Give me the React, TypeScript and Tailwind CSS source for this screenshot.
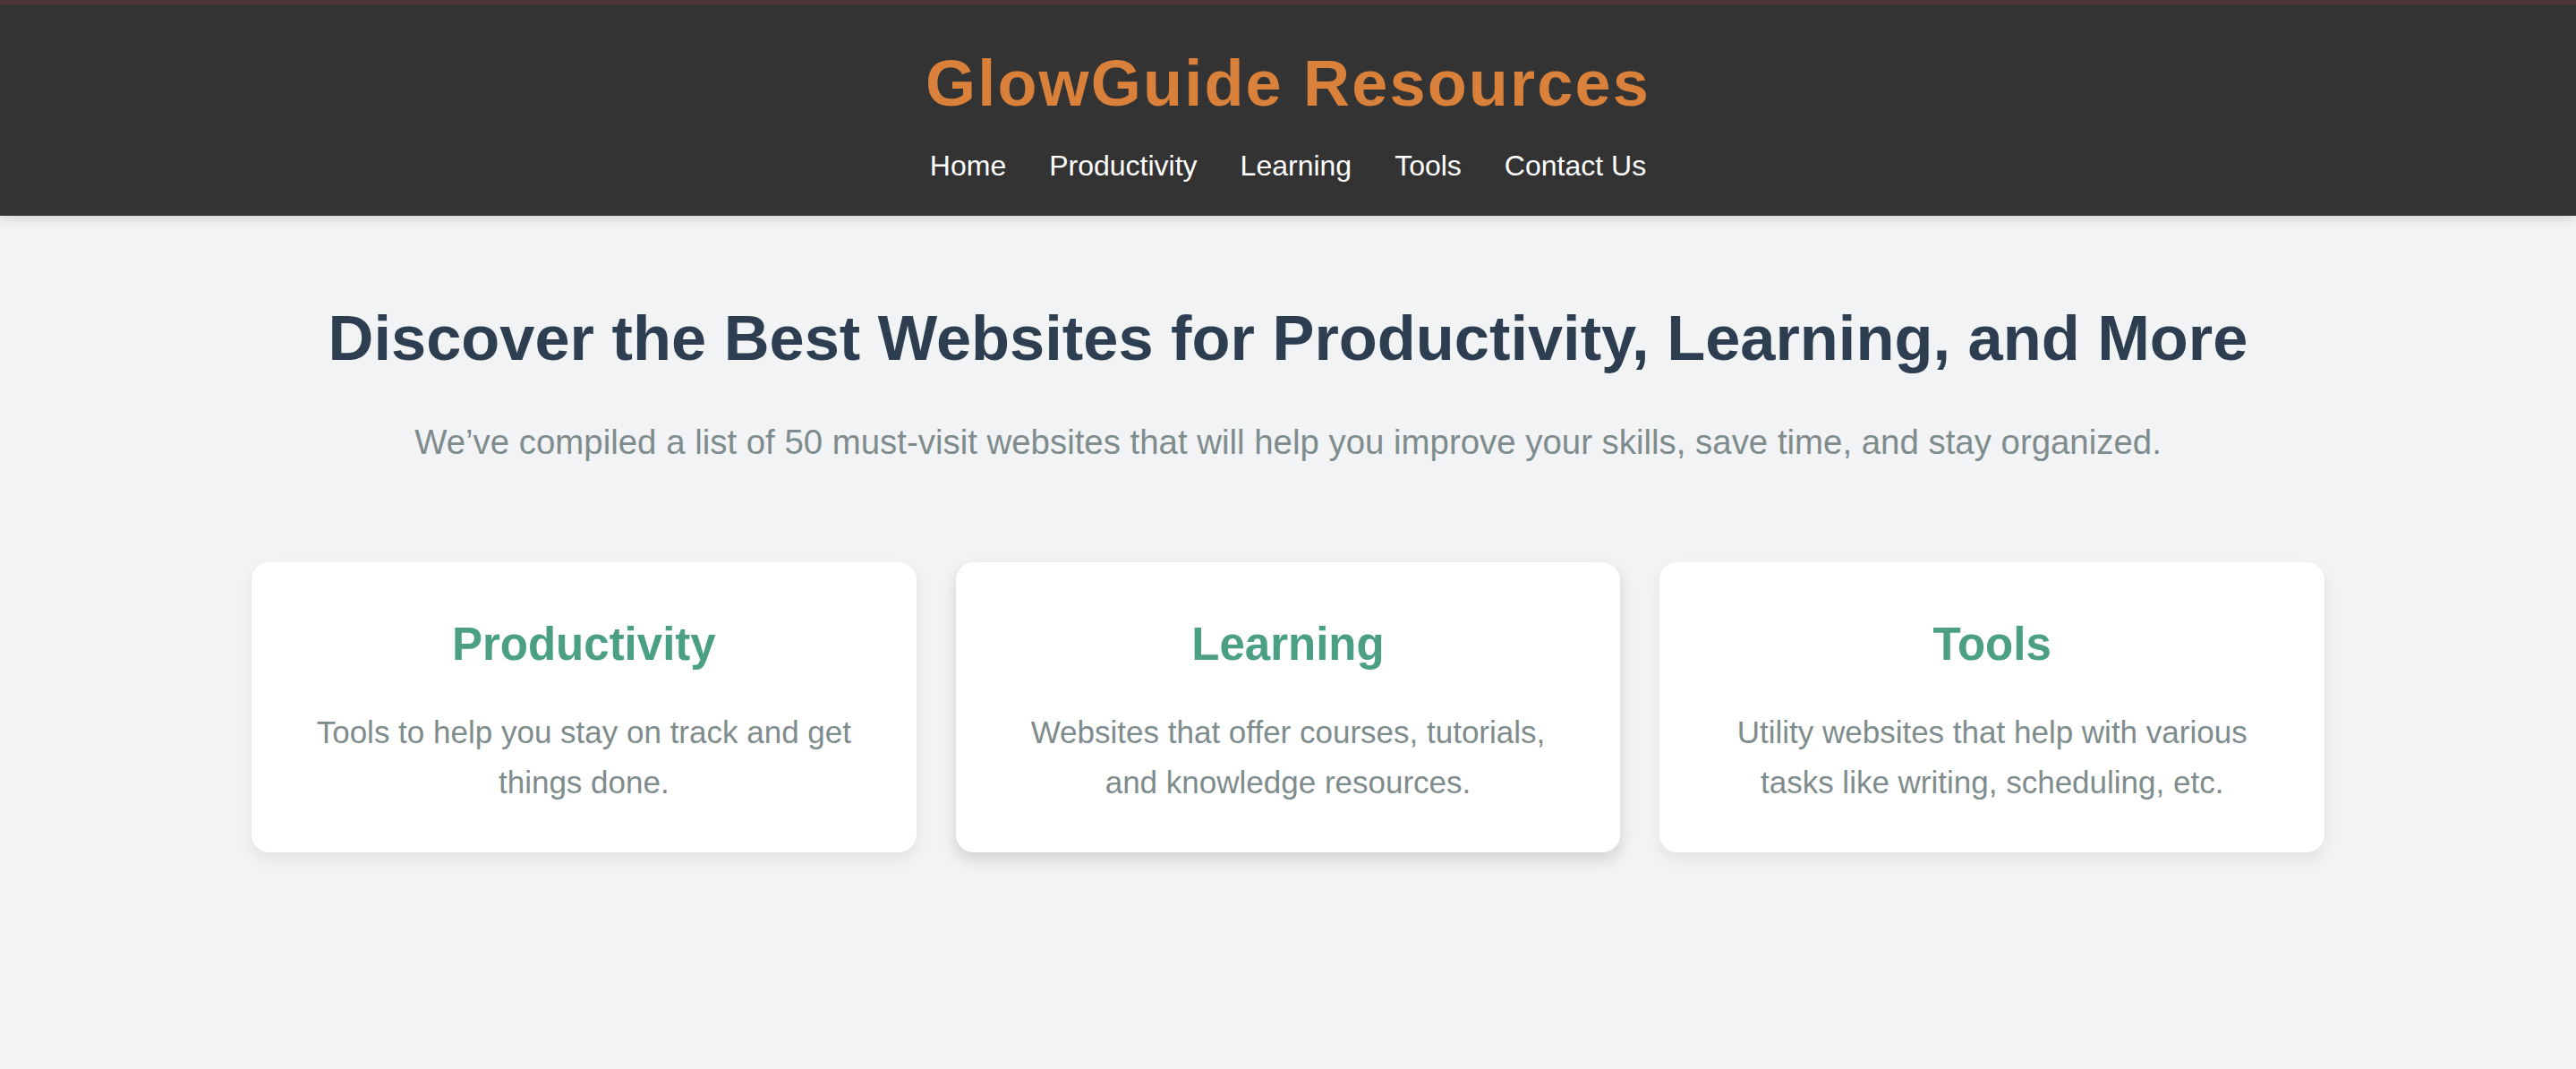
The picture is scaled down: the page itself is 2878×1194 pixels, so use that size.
import React from "react";

const cards = [
  { title: "Productivity", text: "Tools to help you stay on track and get things done.", strong: false },
  { title: "Learning", text: "Websites that offer courses, tutorials, and knowledge resources.", strong: true },
  { title: "Tools", text: "Utility websites that help with various tasks like writing, scheduling, etc.", strong: false },
];

export default function App() {
  return (
    <div
      className="min-h-[1194px] bg-[#f2f3f5] text-center"
      style={{ fontFamily: '"Liberation Sans", Arial, sans-serif' }}
    >
      <header className="relative z-10 bg-[#333333] border-t-[6px] border-[#4d3437] pt-[47px] pb-[37px] shadow-[0_4px_12px_rgba(0,0,0,0.12)]">
        <h1 className="text-[72px] leading-[80px] font-bold tracking-[2.2px] text-[#d9813a]">
          GlowGuide Resources
        </h1>
        <nav className="mt-[34px] flex justify-center gap-[48px] text-[32px] leading-[37px] text-white">
          <a>Home</a>
          <a>Productivity</a>
          <a>Learning</a>
          <a>Tools</a>
          <a>Contact Us</a>
        </nav>
      </header>
      <main className="pt-[97px]">
        <h2 className="text-[70.4px] leading-[80px] font-bold text-[#2c3e50]">
          Discover the Best Websites for Productivity, Learning, and More
        </h2>
        <p className="mt-[49px] text-[38.4px] leading-[54px] text-[#7f8c8d]">
          We’ve compiled a list of 50 must-visit websites that will help you improve your skills, save time, and stay organized.
        </p>
        <div className="mx-auto mt-[107px] grid w-[2316px] grid-cols-3 gap-[44px]">
          {cards.map((c) => (
            <div
              key={c.title}
              className={
                c.strong
                  ? "rounded-[20px] bg-white px-[60px] pt-[62px] pb-[50px] shadow-[0_8px_18px_rgba(0,0,0,0.14)]"
                  : "rounded-[20px] bg-white px-[60px] pt-[62px] pb-[50px] shadow-[0_8px_18px_rgba(0,0,0,0.07)]"
              }
            >
              <h3 className="text-[51px] leading-[59px] font-bold text-[#4a9f84]">{c.title}</h3>
              <p className="mt-[41px] text-[35px] leading-[56px] text-[#7f8c8d]">{c.text}</p>
            </div>
          ))}
        </div>
      </main>
    </div>
  );
}
